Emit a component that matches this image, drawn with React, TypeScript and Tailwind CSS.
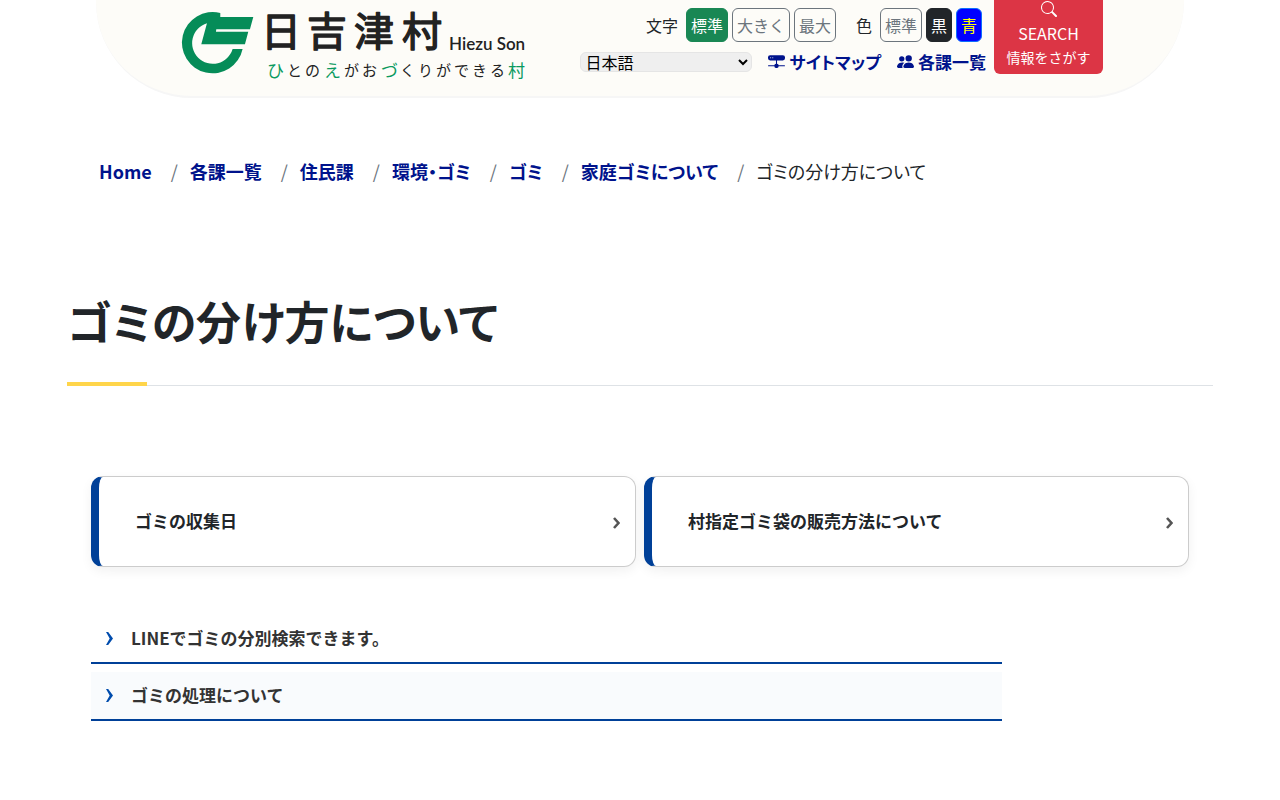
import { clsx } from 'clsx';
import { BsHddNetworkFill, BsPeopleFill, BsSearch } from 'react-icons/bs';

const breadcrumbs = ['Home', '各課一覧', '住民課', '環境・ゴミ', 'ゴミ', '家庭ゴミについて'];

const cards = ['ゴミの収集日', '村指定ゴミ袋の販売方法について'];

const articles = ['LINEでゴミの分別検索できます。', 'ゴミの処理について'];

const languages = ['日本語', 'English', '中文', '한국어'];

function Logo() {
  return (
    <svg
      viewBox="0 0 346 72"
      className="h-[72px] w-[346px] shrink-0 overflow-visible font-['Noto_Sans_CJK_JP',sans-serif]"
      role="img"
      aria-label="日吉津村 Hiezu Son"
    >
      <path
        transform="translate(-101.7 -20) scale(.3333)"
        fill="#058c58"
        d="M420 69A92 92 0 1 0 487 177L457 177A62 62 0 1 1 380 100L363 163L494 163L504 125L407 125L408 118L509 118L519 81L420 81Z"
      />
      <g fill="#222" stroke="#222" strokeWidth="1.4" strokeLinejoin="round" fontSize="40" fontWeight="400">
        <text x="79 125 172 220" y="36">日吉津村</text>
      </g>
      <text x="267" y="40" fill="#222" fontSize="17" fontWeight="600" fontFamily="Lato, sans-serif">
        Hiezu Son
      </text>
      <g fill="#222" fontSize="15">
        <text x="105 123" y="66">との</text>
        <text x="162 180" y="66">がお</text>
        <text x="218 236 254 272 290 308" y="66">くりができる</text>
      </g>
      <g fill="#0a9a5f" fontSize="17">
        <text x="85" y="67">ひ</text>
        <text x="142" y="67">え</text>
        <text x="199" y="67">づ</text>
        <text x="326" y="67">村</text>
      </g>
    </svg>
  );
}

function OptionButton({ label, className }: { label: string; className: string }) {
  return (
    <button type="button" className={clsx('h-[34px] rounded-md border px-1 text-base', className)}>
      {label}
    </button>
  );
}

function LanguageSelect() {
  return (
    <div className="relative">
      <select
        aria-label="言語"
        className="block h-5 w-[172px] appearance-none rounded-md border border-[#e5e5e5] bg-[#efefef] pl-1 text-base leading-[18px] font-normal text-black"
      >
        {languages.map((language) => (
          <option key={language}>{language}</option>
        ))}
      </select>
      <svg
        viewBox="0 0 10 7"
        className="pointer-events-none absolute top-[7px] right-1 h-[7px] w-[10px]"
        fill="none"
        stroke="#000"
        strokeWidth="2"
      >
        <path d="M1 1l4 4l4-4" />
      </svg>
    </div>
  );
}

function Header() {
  return (
    <header className="mx-auto flex h-[98px] w-[85%] items-start rounded-b-[96px] border-b-2 border-[#f6f6f6] bg-[#fdfcf8] pr-[81px] pl-[86px]">
      <a href="#" className="mt-[10px]">
        <Logo />
      </a>
      <div className="ml-auto flex flex-col items-end pt-2">
        <div className="flex items-center gap-1 pr-1">
          <span className="mr-1">文字</span>
          <OptionButton label="標準" className="border-[#198754] bg-[#198754] text-white" />
          <OptionButton label="大きく" className="border-[#6c757d] text-[#6c757d]" />
          <OptionButton label="最大" className="border-[#6c757d] text-[#6c757d]" />
          <span className="mr-1 ml-4">色</span>
          <OptionButton label="標準" className="border-[#6c757d] text-[#6c757d]" />
          <OptionButton label="黒" className="border-[#212529] bg-[#212529] text-white" />
          <OptionButton label="青" className="border-[#0d6efd] bg-[#0000ff] text-[#ffff00]" />
        </div>
        <div className="mt-[7px] flex items-center gap-4 text-[17px] font-bold text-[#00138c] [font-feature-settings:'palt']">
          <LanguageSelect />
          <a href="#" className="flex items-center gap-1">
            <BsHddNetworkFill />
            サイトマップ
          </a>
          <a href="#" className="flex items-center gap-1">
            <BsPeopleFill />
            各課一覧
          </a>
        </div>
      </div>
      <button
        type="button"
        className="ml-2 flex h-[74px] w-[109px] shrink-0 flex-col items-center rounded-b-md bg-[#dc3545] pt-px text-sm leading-6 text-white"
      >
        <BsSearch className="mb-1 size-4 shrink-0" />
        <span className="text-base leading-6">SEARCH</span>
        <span>情報をさがす</span>
      </button>
    </header>
  );
}

export default function App() {
  return (
    <div className="min-h-screen bg-white font-['Noto_Sans_CJK_JP',sans-serif] text-[#212529]">
      <Header />

      <main className="mx-auto max-w-[1146px]">
        <nav aria-label="パンくず" className="px-8 pt-[59px]">
          <ol className="flex flex-wrap text-lg leading-7 [font-feature-settings:'palt']">
            {breadcrumbs.map((name) => (
              <li key={name} className="flex">
                <a href="#" className="font-bold text-[#00138c]">
                  {name}
                </a>
                <span className="pr-3 pl-[19px] text-[#6c757d]">/</span>
              </li>
            ))}
            <li>ゴミの分け方について</li>
          </ol>
        </nav>

        <h1 className="relative mt-[104px] border-b border-[#dee2e6] pb-8 text-[45px] leading-[64px] font-bold [font-feature-settings:'palt'] after:absolute after:-bottom-px after:left-0 after:h-1 after:w-20 after:bg-[#ffd54a]">
          ゴミの分け方について
        </h1>

        <div className="px-6">
          <div className="mt-[90px] grid grid-cols-2 gap-2">
            {cards.map((title) => (
              <a
                key={title}
                href="#"
                className="flex h-[91px] items-center justify-between rounded-xl border border-l-8 border-[#ccc] border-l-[#004098] bg-white pr-[15px] pb-0.5 pl-9 text-[17px] font-bold shadow-[0_4px_12px_rgba(0,0,0,0.06)]"
              >
                {title}
                <svg viewBox="0 0 7 12" className="mt-1 h-3 w-[7px]" fill="none" stroke="#555" strokeWidth="2.6">
                  <path d="M1 1l4.5 5L1 11" />
                </svg>
              </a>
            ))}
          </div>

          <ul className="mt-12 flex w-[83%] flex-col gap-2">
            {articles.map((title) => (
              <li key={title} className="border-b-2 border-[#004098] even:bg-[#f9fbfd]">
                <a
                  href="#"
                  className="flex h-[47px] items-center gap-[18px] pb-0.5 pl-[15px] text-[17px] font-bold text-[#333]"
                >
                  <svg viewBox="0 0 7 13" className="mt-0.5 h-[13px] w-[7px]" fill="#004cad">
                    <path d="M0 0h2.2L7 6.5L2.2 13H0L3.7 6.5z" />
                  </svg>
                  {title}
                </a>
              </li>
            ))}
          </ul>
        </div>
      </main>
    </div>
  );
}
